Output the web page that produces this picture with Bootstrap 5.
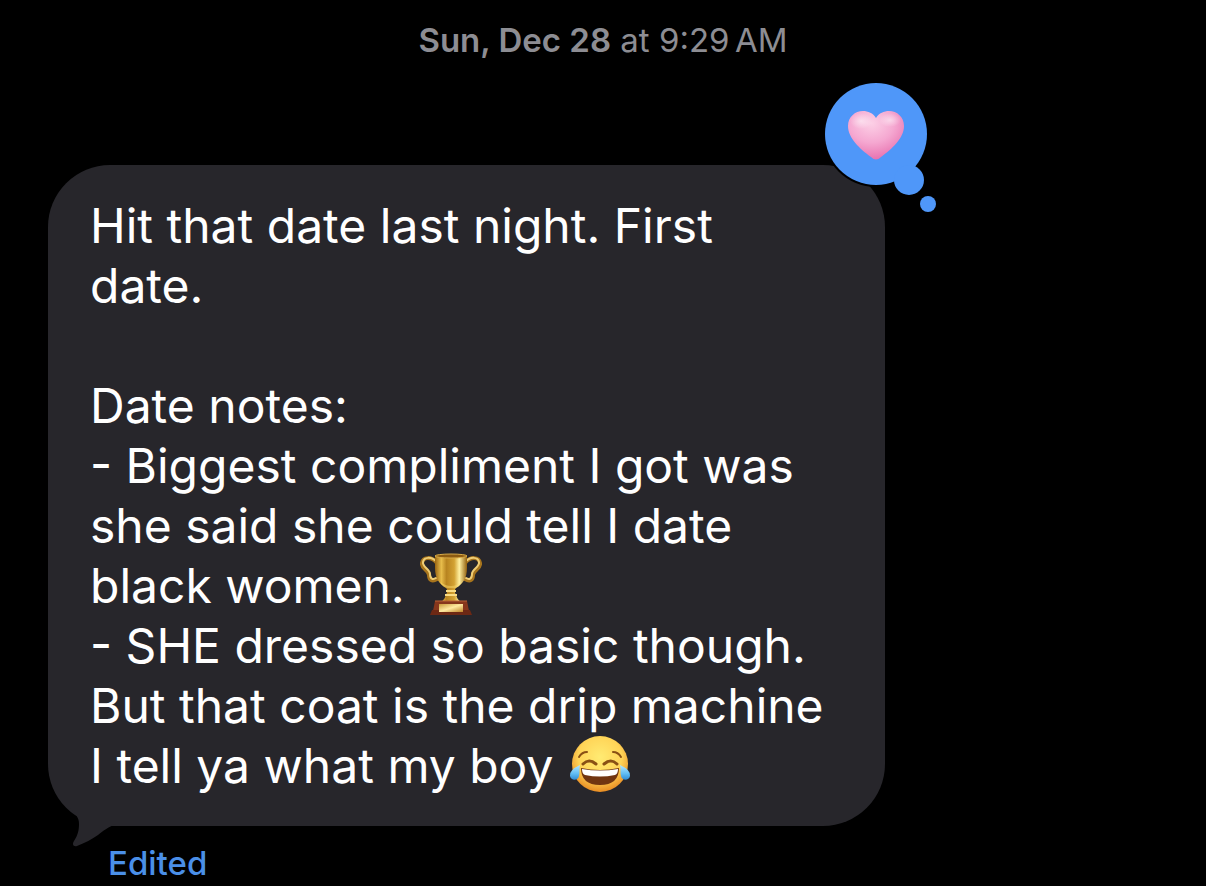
<!DOCTYPE html>
<html lang="en" data-bs-theme="dark">
<head>
<meta charset="utf-8">
<meta name="viewport" content="width=device-width, initial-scale=1">
<title>Messages</title>
<link href="https://cdn.jsdelivr.net/npm/bootstrap@5.3.0/dist/css/bootstrap.min.css" rel="stylesheet">
<style>
  body { background: #000; font-family: Inter, "Liberation Sans", sans-serif; }
  .thread { padding-top: 20px; }
  .messages { padding: 0 42px 0 48px; }
  .stamp { color: #8d8d93; font-size: 33px; line-height: 40px; margin-bottom: 105px; }
  .stamp strong { font-weight: 600; }
  .bubble { background: #27262b; color: #fff; border-radius: 62px; padding: 31px 40px 30px 42px; }
  .bubble p { font-size: 48px; line-height: 60px; }
  .emoji { width: 62px; height: 62px; margin: -8px 0 -8px 2px; vertical-align: -4px; }
  .tail { position: absolute; left: 20px; bottom: -24px; width: 50px; height: 50px; }
  .tapback { position: absolute; top: -86px; right: -54px; width: 118px; height: 134px; }
  .edited { color: #4a8fe8; font-size: 33px; line-height: 40px; font-weight: 500; margin: 17px 0 0 60px; }
  .edited:hover { color: #7fb0f5; }
</style>
</head>
<body>
<main class="thread">
  <h1 class="stamp text-center fw-normal"><strong>Sun, Dec 28</strong> at 9:29&#8198;AM</h1>
  <div class="messages"><div class="row g-0">
    <div class="col-9">
      <article class="bubble position-relative">
        <p class="mb-0">Hit that date last night. First<br>date.<br><br>Date notes:<br>- Biggest compliment I got was<br>she said she could tell I date<br>black women.
          <svg class="emoji" viewBox="0 0 62 62" role="img" aria-label="Trophy">
            <defs>
              <linearGradient id="gold"><stop offset="0" stop-color="#9a6512"/><stop offset=".2" stop-color="#e8bd4b"/><stop offset=".36" stop-color="#b88420"/><stop offset=".6" stop-color="#d3a232"/><stop offset=".76" stop-color="#fff0a0"/><stop offset="1" stop-color="#92600e"/></linearGradient>
              <linearGradient id="plate" x2="1" y2="1"><stop offset="0" stop-color="#c99a3a"/><stop offset=".5" stop-color="#ffe9a0"/><stop offset="1" stop-color="#bd8428"/></linearGradient>
            </defs>
            <g fill="none" stroke-linecap="round">
              <path d="M17 10C11 3 3 4 2 10S9 17 9 22s3 7 8 4M45 10c6-7 14-6 15 0s-7 7-7 12-3 7-8 4" stroke="#a8751d" stroke-width="4"/>
              <path d="M17 9C11 3 4 4 3 9S10 16 10 21s3 6 6 4M45 9c6-6 13-5 14 0s-7 7-7 12-3 6-6 4" stroke="#efcd75" stroke-width="2"/>
            </g>
            <path d="M15 3h32v12c0 10-4 16-11 20-2 2-1 5 0 7s1 4 5 7H21c4-3 4-5 5-7s2-5 0-7C19 31 15 25 15 15z" fill="url(#gold)"/>
            <path d="M20 29q11 8 22 0-3 5-7 6h-8q-5-2-7-6z" fill="#ffe174" opacity=".45"/>
            <ellipse cx="31" cy="3" rx="16" ry="2" fill="#8c5b12" stroke="#d9ac48"/>
            <path d="M26 38h10M25 42h12" stroke="#f9dc84" stroke-width="2"/>
            <path d="M15 48h32l2 10H13z" fill="#87371c"/><path d="M12 57h38l2 5H10z" fill="#6d2814"/><path d="M15 48h32" stroke="#ba6237"/>
            <path d="M19 51h24v8H19z" fill="url(#plate)"/>
          </svg><br>- SHE dressed so basic though.<br>But that coat is the drip machine<br>I tell ya what my boy
          <svg class="emoji" viewBox="0 0 62 62" role="img" aria-label="Face with tears of joy">
            <defs>
              <radialGradient id="face" cx=".5" cy=".38" r=".62"><stop offset="0" stop-color="#ffeb73"/><stop offset=".62" stop-color="#ffd457"/><stop offset="1" stop-color="#e98c23"/></radialGradient>
              <linearGradient id="tear" x2="0" y2="1"><stop offset="0" stop-color="#b5e7ff"/><stop offset=".6" stop-color="#5fbcf3"/><stop offset="1" stop-color="#318bd3"/></linearGradient>
            </defs>
            <circle cx="31" cy="31" r="28" fill="url(#face)"/>
            <g fill="none" stroke="#895014" stroke-width="2" stroke-linecap="round"><path d="M10 24q3-5 8-5M52 24q-3-5-8-5"/><path d="M14 31q6-6 13 0M35 31q7-6 13 0" stroke-width="3"/></g>
            <path d="M12 35q19 4 38 0 0 17-19 17T12 35z" fill="#713511"/>
            <path d="M13 36q18 3 36 0 0 5-3 6-15 3-30 0-3-1-3-6z" fill="#fff"/>
            <path d="M11 32Q0 37 1 43c1 5 8 5 9 0 1-3 0-7 1-11zM51 32q11 5 10 11c-1 5-8 5-9 0-1-3 0-7-1-11z" fill="url(#tear)"/>
          </svg></p>
        <svg class="tail" viewBox="0 0 50 50" aria-hidden="true"><path d="M2 8C8 14 11 18 11 24s-1 11-5 17c-2 3-1 6 3 5 8-3 15-7 21-11 5-4 10-8 18-11V8z" fill="#27262b"/></svg>
        <svg class="tapback" viewBox="0 0 118 134" role="img" aria-label="Heart reaction">
          <defs>
            <radialGradient id="heart" cx=".42" cy=".25" r=".8"><stop offset="0" stop-color="#fcd0e6"/><stop offset=".5" stop-color="#f5a8d1"/><stop offset="1" stop-color="#e66bab"/></radialGradient>
            <radialGradient id="shine"><stop offset="0" stop-color="#fff" stop-opacity=".5"/><stop offset="1" stop-color="#fff" stop-opacity="0"/></radialGradient>
          </defs>
          <circle cx="55" cy="55" r="53" fill="#000"/>
          <g fill="#4f97f9"><circle cx="55" cy="55" r="51"/><circle cx="88" cy="101" r="15"/><circle cx="107" cy="125" r="8"/></g>
          <path d="M55 39c3-5 8-7 13-7 8 0 15 6 15 15 0 12-12 23-23 31q-5 5-10 0C39 70 27 59 27 47c0-9 7-15 15-15 5 0 10 2 13 7z" fill="url(#heart)"/>
          <g fill="url(#shine)"><ellipse cx="40" cy="42" rx="11" ry="8"/><ellipse cx="69" cy="41" rx="11" ry="7"/></g>
        </svg>
      </article>
      <a href="#" class="edited d-inline-block text-decoration-none">Edited</a>
    </div>
  </div></div>
</main>
<script src="https://cdn.jsdelivr.net/npm/bootstrap@5.3.0/dist/js/bootstrap.bundle.min.js"></script>
</body>
</html>
